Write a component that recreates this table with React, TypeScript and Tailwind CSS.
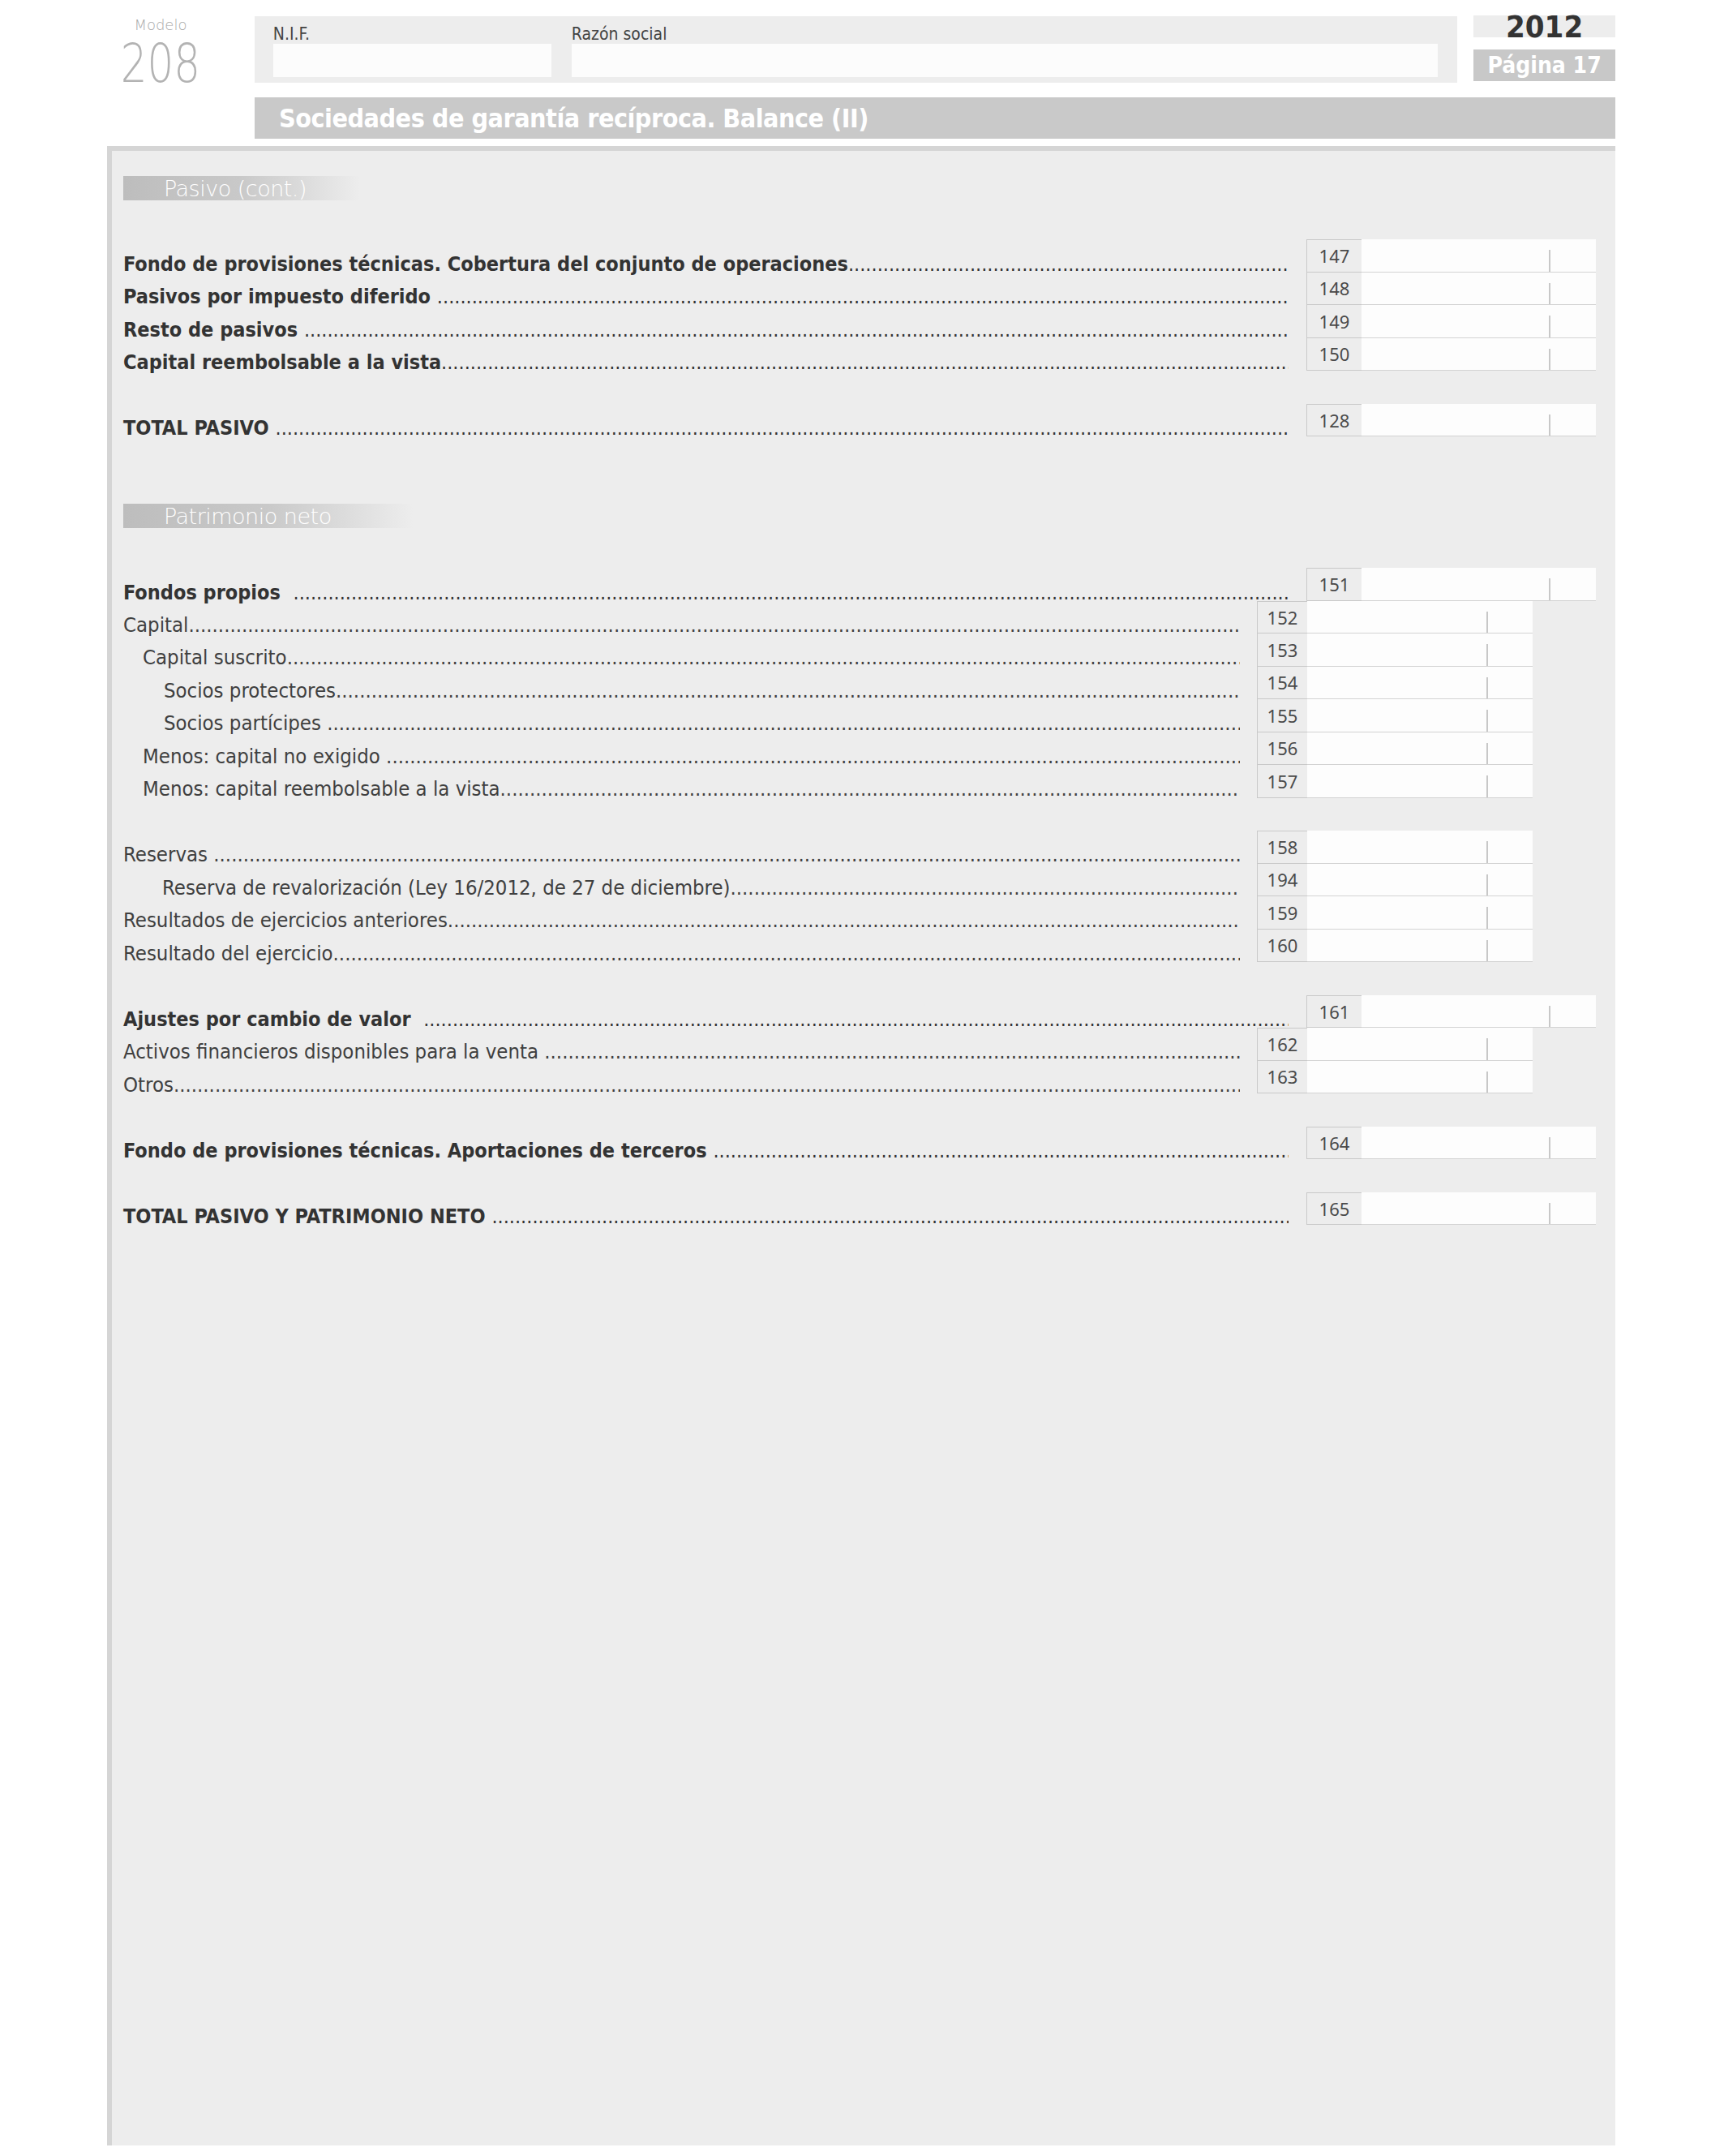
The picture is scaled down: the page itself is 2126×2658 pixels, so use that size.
const narrow =
  "font-[family-name:'Liberation_Sans_Narrow','DejaVu_Sans',sans-serif] font-stretch-condensed";
const digits = "font-[family-name:'Noto_Sans',sans-serif]";

type Item =
  | { kind: "section"; title: string; width: string; spacing: string }
  | { kind: "gap" }
  | {
      kind: "row";
      label: string;
      code: string;
      bold?: boolean;
      sub?: boolean;
      indent?: string;
      first?: boolean;
    };

const items: Item[] = [
  { kind: "section", title: "Pasivo (cont.)", width: "w-[292px]", spacing: "mt-[31px] mb-[48px]" },
  { kind: "row", label: "Fondo de provisiones técnicas. Cobertura del conjunto de operaciones", code: "147", bold: true, first: true },
  { kind: "row", label: "Pasivos por impuesto diferido ", code: "148", bold: true },
  { kind: "row", label: "Resto de pasivos ", code: "149", bold: true },
  { kind: "row", label: "Capital reembolsable a la vista", code: "150", bold: true },
  { kind: "gap" },
  { kind: "row", label: "TOTAL PASIVO ", code: "128", bold: true, first: true },
  { kind: "section", title: "Patrimonio neto", width: "w-[357px]", spacing: "mt-[83px] mb-[49px]" },
  { kind: "row", label: "Fondos propios  ", code: "151", bold: true, first: true },
  { kind: "row", label: "Capital", code: "152", sub: true, first: true },
  { kind: "row", label: "Capital suscrito", code: "153", sub: true, indent: "pl-[24px]" },
  { kind: "row", label: "Socios protectores", code: "154", sub: true, indent: "pl-[50px]" },
  { kind: "row", label: "Socios partícipes ", code: "155", sub: true, indent: "pl-[50px]" },
  { kind: "row", label: "Menos: capital no exigido ", code: "156", sub: true, indent: "pl-[24px]" },
  { kind: "row", label: "Menos: capital reembolsable a la vista", code: "157", sub: true, indent: "pl-[24px]" },
  { kind: "gap" },
  { kind: "row", label: "Reservas ", code: "158", sub: true, first: true },
  { kind: "row", label: "Reserva de revalorización (Ley 16/2012, de 27 de diciembre)", code: "194", sub: true, indent: "pl-[48px]" },
  { kind: "row", label: "Resultados de ejercicios anteriores", code: "159", sub: true },
  { kind: "row", label: "Resultado del ejercicio", code: "160", sub: true },
  { kind: "gap" },
  { kind: "row", label: "Ajustes por cambio de valor  ", code: "161", bold: true, first: true },
  { kind: "row", label: "Activos financieros disponibles para la venta ", code: "162", sub: true, first: true },
  { kind: "row", label: "Otros", code: "163", sub: true },
  { kind: "gap" },
  { kind: "row", label: "Fondo de provisiones técnicas. Aportaciones de terceros ", code: "164", bold: true, first: true },
  { kind: "gap" },
  { kind: "row", label: "TOTAL PASIVO Y PATRIMONIO NETO ", code: "165", bold: true, first: true },
];

const dots = ".".repeat(400);

function SectionTitle({ title, width, spacing }: { title: string; width: string; spacing: string }) {
  return (
    <div
      className={`${width} ${spacing} h-[30px] bg-linear-to-r from-[#bdbdbd] via-[#c9c9c9] to-[#ededed] pl-[50px] flex items-center`}
    >
      <span className={`${narrow} text-[27px] tracking-[-0.5px] leading-none font-light text-white`}>{title}</span>
    </div>
  );
}

function AmountBox({ code, sub, first }: { code: string; sub?: boolean; first?: boolean }) {
  return (
    <div className={`flex h-full ${sub ? "w-[340px]" : "w-[357px]"}`}>
      <div
        className={`${sub ? "w-[62px]" : "w-[68px]"} h-full shrink-0 bg-[#ededed] border-l border-b border-[#c9c9c9] ${
          first ? "border-t" : ""
        } flex items-center justify-center`}
      >
        <span className={`${digits} text-[22px] leading-none text-[#4a4a4a]`}>{code}</span>
      </div>
      <div className="relative flex-1 h-full bg-[#fdfdfd] border-b border-[#d3d3d3]">
        <div
          className={`absolute bottom-0 top-[13px] w-[2px] bg-[#c8c8c8] ${sub ? "left-[221px]" : "left-[231px]"}`}
        />
      </div>
    </div>
  );
}

function Row({ label, code, bold, sub, indent, first }: Extract<Item, { kind: "row" }>) {
  return (
    <div className="flex h-[40.5px] items-end">
      <div
        className={`flex-1 min-w-0 flex items-baseline whitespace-pre ${narrow} leading-none -mb-[2px] ${
          sub ? "mr-[21px]" : "mr-[22px]"
        } ${indent ?? ""} ${
          bold ? "text-[25px] font-bold text-[#333333]" : "text-[25.5px] font-normal text-[#404040]"
        }`}
      >
        <span className="shrink-0">{label}</span>
        <span className="flex-1 min-w-0 overflow-hidden font-normal">{dots}</span>
      </div>
      <AmountBox code={code} sub={sub} first={first} />
      {sub && <div className="w-[78px] shrink-0" />}
    </div>
  );
}

export default function App() {
  return (
    <div className="w-[2126px] min-h-[2658px] bg-white">
      <div className="ml-[132px] w-[1860px]">
        {/* header */}
        <div className="flex items-start h-[102px]">
          <div className="w-[132px] flex flex-col items-center pt-[22px]">
            <span className={`${narrow} text-[18px] leading-none text-[#a8a8a8] font-light`}>Modelo</span>
            <span className="font-[family-name:'DejaVu_Sans',sans-serif] text-[66px] leading-none text-[#b3b3b3] font-extralight mt-[6px] scale-x-[0.78]">
              208
            </span>
          </div>
          <div className="ml-[50px] mt-[20px] w-[1485px] h-[82px] bg-[#ededed] flex gap-[25px] pl-[23px] pr-[24px] pt-[12px]">
            <div className="w-[343px] flex flex-col">
              <span className={`${narrow} text-[21px] leading-none text-[#444444] h-[20px]`}>N.I.F.</span>
              <div className="mt-[2px] h-[41px] bg-[#fcfcfc]" />
            </div>
            <div className="flex-1 flex flex-col">
              <span className={`${narrow} text-[21px] leading-none text-[#444444] h-[20px]`}>Razón social</span>
              <div className="mt-[2px] h-[41px] bg-[#fcfcfc]" />
            </div>
          </div>
          <div className="ml-[20px] mt-[19px] w-[175px] flex flex-col">
            <div className="h-[27px] bg-[#ededed] flex items-center justify-center">
              <span className={`${narrow} text-[38px] leading-none font-bold text-[#333333]`}>2012</span>
            </div>
            <div className="mt-[15px] h-[39px] bg-[#c8c8c8] flex items-center justify-center">
              <span className={`${narrow} text-[28px] leading-none font-bold text-white`}>Página 17</span>
            </div>
          </div>
        </div>

        {/* title bar */}
        <div className="ml-[182px] mt-[18px] w-[1678px] h-[51px] bg-[#c9c9c9] flex items-center pl-[30px]">
          <span className={`${narrow} text-[32px] tracking-[-0.5px] leading-none font-bold text-white`}>
            Sociedades de garantía recíproca. Balance (II)
          </span>
        </div>

        {/* main panel */}
        <div className="mt-[9px] h-[2465px] bg-[#ededed] border-t-[6px] border-l-[6px] border-[#d5d5d5] pl-[14px] pr-[24px] flex flex-col">
          {items.map((item, i) => {
            if (item.kind === "section")
              return <SectionTitle key={i} title={item.title} width={item.width} spacing={item.spacing} />;
            if (item.kind === "gap") return <div key={i} className="h-[40.5px]" />;
            return <Row key={i} {...item} />;
          })}
        </div>
      </div>
    </div>
  );
}
